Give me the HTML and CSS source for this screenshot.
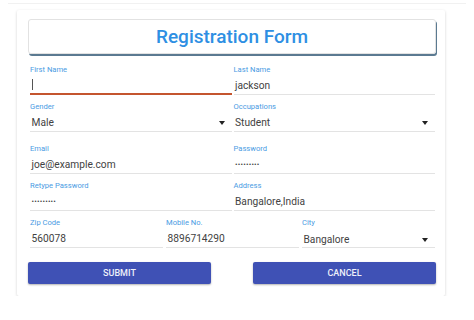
FILE: index.html
```html
<!DOCTYPE html>
<html>
<head>
<meta charset="utf-8">
<link rel="stylesheet" href="styles.css">
</head>
<body>
<div class="page">
  <div class="card">
    <div class="title">Registration Form</div>
    <div class="form">
      <div class="row two">
        <div class="field">
          <div class="label">First Name</div>
          <div class="input focused"><span class="caret"></span></div>
        </div>
        <div class="field">
          <div class="label">Last Name</div>
          <div class="input">jackson</div>
        </div>
      </div>
      <div class="row two selects">
        <div class="field">
          <div class="label">Gender</div>
          <div class="input select">Male<span class="arrow"></span></div>
        </div>
        <div class="field">
          <div class="label">Occupations</div>
          <div class="input select">Student<span class="arrow"></span></div>
        </div>
      </div>
      <div class="row two">
        <div class="field">
          <div class="label">Email</div>
          <div class="input">joe@example.com</div>
        </div>
        <div class="field">
          <div class="label">Password</div>
          <div class="input dots">•••••••••</div>
        </div>
      </div>
      <div class="row two">
        <div class="field">
          <div class="label">Retype Password</div>
          <div class="input dots">•••••••••</div>
        </div>
        <div class="field">
          <div class="label">Address</div>
          <div class="input">Bangalore,India</div>
        </div>
      </div>
      <div class="row three">
        <div class="field">
          <div class="label">Zip Code</div>
          <div class="input">560078</div>
        </div>
        <div class="field">
          <div class="label">Mobile No.</div>
          <div class="input">8896714290</div>
        </div>
        <div class="field">
          <div class="label">City</div>
          <div class="input select city">Bangalore<span class="arrow"></span></div>
        </div>
      </div>
    </div>
    <div class="buttons">
      <button class="btn">SUBMIT</button>
      <button class="btn">CANCEL</button>
    </div>
  </div>
</div>
</body>
</html>
```

FILE: styles.css
```css
html, body {
  margin: 0;
  padding: 0;
  background: #ffffff;
  font-family: Roboto, "Liberation Sans", sans-serif;
}

.page {
  margin: 3px 8px 0 8px;
  border-top: 1px solid #f1f1f1;
  padding: 6px 21px 0 9px;
}

.card {
  background: #fff;
  box-shadow: 0 1px 3px rgba(0, 0, 0, 0.18);
  border-radius: 2px;
  padding: 9px 9px 12px 11px;
}

.title {
  height: 33px;
  border: 1px solid #e2e2e2;
  border-radius: 3px;
  box-shadow: 1px 2px 0 #5b7a91;
  color: #2e8fe3;
  font-size: 19px;
  font-weight: 500;
  display: flex;
  align-items: center;
  justify-content: center;
}

.form {
  margin-top: 11px;
  padding: 0 1px 0 2px;
  display: flex;
  flex-direction: column;
  gap: 7px;
}

.row {
  display: grid;
  column-gap: 2px;
}

.row.two {
  grid-template-columns: 1fr 1fr;
}

.row.three {
  grid-template-columns: 1fr 1fr 1fr;
  column-gap: 3px;
}

.row.selects {
  margin-bottom: 5px;
}

.label {
  font-size: 7.6px;
  line-height: 10px;
  color: #4a9be3;
}

.input {
  position: relative;
  height: 19px;
  line-height: 21px;
  font-size: 10.2px;
  color: #424242;
  padding-left: 1.5px;
  border-bottom: 1px solid #e3e3e3;
}

.input.focused {
  height: 18px;
  border-bottom: 2px solid #c4552f;
}

.caret {
  display: inline-block;
  width: 1px;
  height: 11px;
  background: #555;
  vertical-align: -1px;
}

.input.dots {
  font-size: 7.5px;
  letter-spacing: 0.2px;
}

.input.city {
  line-height: 24px;
}

.arrow {
  position: absolute;
  right: 7px;
  top: 9px;
  width: 0;
  height: 0;
  border-left: 3.5px solid transparent;
  border-right: 3.5px solid transparent;
  border-top: 4px solid #222;
}

.input.city .arrow {
  top: 10px;
}

.buttons {
  margin-top: 14px;
  display: flex;
  justify-content: space-between;
}

.btn {
  width: 183px;
  height: 22px;
  border: none;
  border-radius: 2px;
  background: #3f51b5;
  color: #eef0fa;
  font-family: Roboto, "Liberation Sans", sans-serif;
  font-size: 9px;
  font-weight: 500;
  box-shadow: 0 1px 2px rgba(0, 0, 0, 0.3);
  padding: 0;
}
```
